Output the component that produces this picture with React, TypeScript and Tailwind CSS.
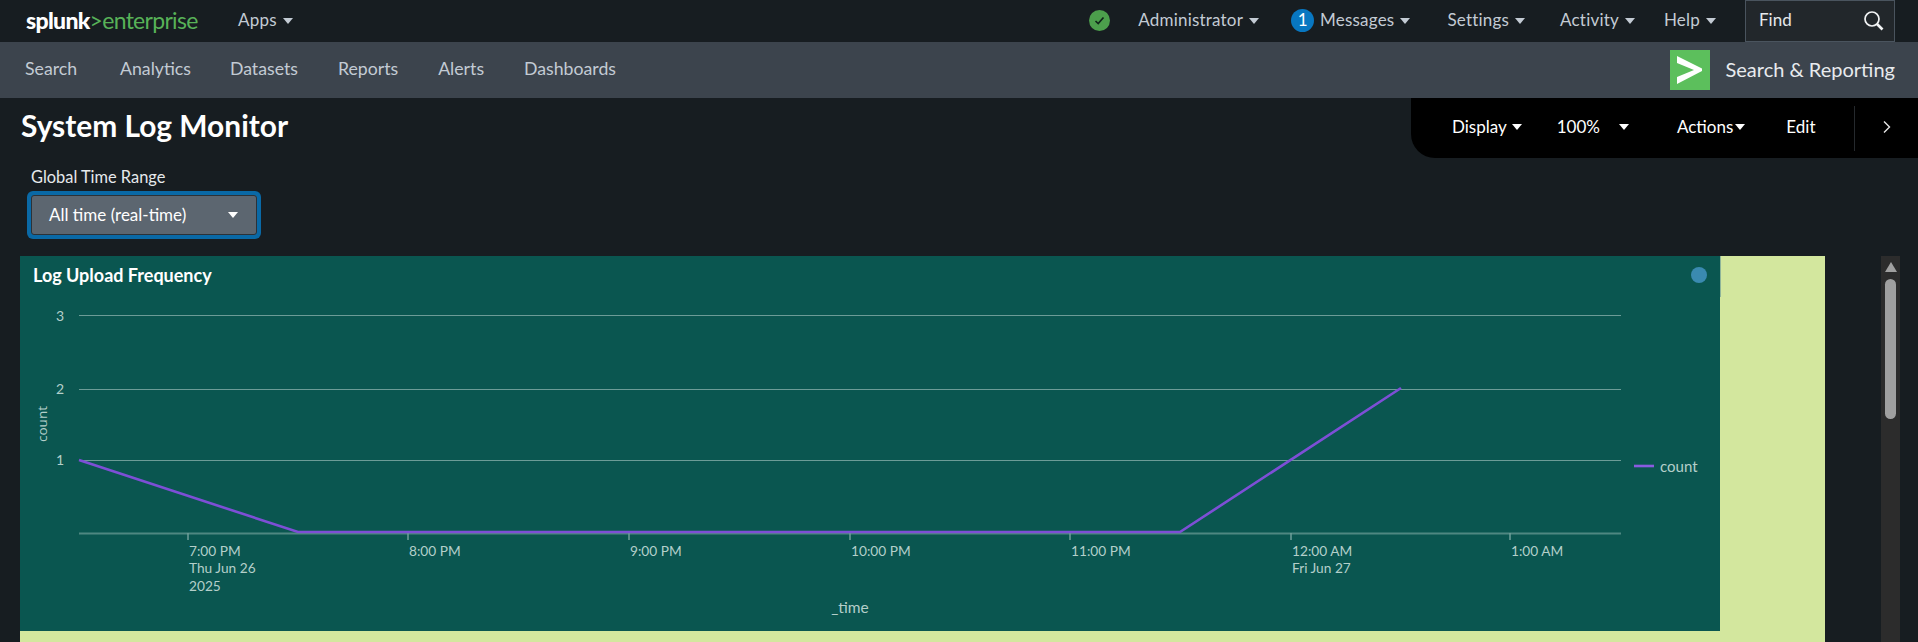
import React from "react";

const font = "font-['Lato','Open_Sans',sans-serif]";

function Caret({ className = "text-[#c3cbd4]" }: { className?: string }) {
  return (
    <svg width="10" height="6" viewBox="0 0 10 6" className={className}>
      <polygon points="0,0 10,0 5,6" fill="currentColor" />
    </svg>
  );
}

function TopItem({ label, ml }: { label: string; ml: string }) {
  return (
    <div className={`flex items-center gap-[6px] ${ml}`}>
      <span className="text-[#c3cbd4] text-[17px] leading-[22px] mt-[-2px] tracking-[0.2px]">{label}</span>
      <Caret />
    </div>
  );
}

function ActionItem({ label, className }: { label: string; className: string }) {
  return (
    <div className={`flex items-center ${className}`}>
      <span className="text-white text-[17px]">{label}</span>
      <Caret className="text-white" />
    </div>
  );
}

function Chart() {
  const grid = [315, 389, 460];
  const ticks = [188, 408, 629, 850, 1070, 1291, 1510];
  const labels: [number, string[]][] = [
    [188, ["7:00 PM", "Thu Jun 26", "2025"]],
    [408, ["8:00 PM"]],
    [629, ["9:00 PM"]],
    [850, ["10:00 PM"]],
    [1070, ["11:00 PM"]],
    [1291, ["12:00 AM", "Fri Jun 27"]],
    [1510, ["1:00 AM"]],
  ];
  const X = (x: number) => x - 20;
  const Y = (y: number) => y - 256;
  const txt = "#b4cfca";
  return (
    <svg width="1700" height="375" viewBox="0 0 1700 375" className="block" style={{ fontFamily: "Lato, 'Open Sans', sans-serif" }}>
      {grid.map((y) => (
        <line key={y} x1={X(79)} x2={X(1621)} y1={Y(y) + 0.5} y2={Y(y) + 0.5} stroke="#6c9c97" strokeWidth="1" />
      ))}
      <line x1={X(79)} x2={X(1621)} y1={Y(533.5)} y2={Y(533.5)} stroke="#4f8781" strokeWidth="2" />
      {ticks.map((x) => (
        <line key={x} x1={X(x)} x2={X(x)} y1={Y(533)} y2={Y(540)} stroke="#6f9f9a" strokeWidth="1.5" />
      ))}
      <polyline
        points={`${X(79)},${Y(460)} ${X(298)},${Y(532)} ${X(1180)},${Y(532)} ${X(1401)},${Y(388)}`}
        fill="none"
        stroke="#7d4fd6"
        strokeWidth="2.6"
      />
      {[["3", 321], ["2", 394], ["1", 465]].map(([t, y]) => (
        <text key={t as string} x={X(64)} y={Y(y as number)} textAnchor="end" fill={txt} fontSize="14">{t}</text>
      ))}
      <text transform={`translate(${X(47)},${Y(424)}) rotate(-90)`} textAnchor="middle" fill={txt} fontSize="13.5" style={{ fontFamily: "'Open Sans', sans-serif" }}>count</text>
      {labels.map(([x, lines]) =>
        lines.map((l, i) => (
          <text key={l} x={X(x) + 1} y={Y(555.5 + i * 17.5)} fill={txt} fontSize="13.7">{l}</text>
        ))
      )}
      <text x={X(850)} y={Y(613)} textAnchor="middle" fill={txt} fontSize="15.5">_time</text>
      <line x1={X(1634)} x2={X(1654)} y1={Y(466)} y2={Y(466)} stroke="#8a5be0" strokeWidth="2.6" />
      <text x={X(1660)} y={Y(472)} fill={txt} fontSize="15">count</text>
    </svg>
  );
}

export default function App() {
  return (
    <div className={`w-[1918px] h-[642px] overflow-hidden flex flex-col bg-[#171d21] ${font}`}>
      {/* top bar */}
      <div className="h-[42px] flex items-center shrink-0">
        <div className="ml-[26px] w-[171px] text-[23px] leading-none tracking-[-0.7px] whitespace-nowrap mt-[-2px]">
          <span className="text-white font-black">splunk</span>
          <span className="text-[#58b258]">&gt;enterprise</span>
        </div>
        <TopItem label="Apps" ml="ml-[41px]" />
        <div className="flex-1" />
        <div className="w-[21px] h-[21px] rounded-full bg-[#4c9f4c] flex items-center justify-center mt-[-1px]">
          <svg width="11" height="11" viewBox="0 0 11 11">
            <path d="M1.5 6 L4.2 8.5 L9.5 2.5" fill="none" stroke="#10251a" strokeWidth="1.7" />
          </svg>
        </div>
        <TopItem label="Administrator" ml="ml-[28px]" />
        <div className="ml-[32px] mt-[-2px] w-[23px] h-[23px] rounded-full bg-[#0877c1] flex items-center justify-center text-white text-[17px]">1</div>
        <TopItem label="Messages" ml="ml-[6px]" />
        <TopItem label="Settings" ml="ml-[37px]" />
        <TopItem label="Activity" ml="ml-[35px]" />
        <TopItem label="Help" ml="ml-[29px]" />
        <div className="ml-[29px] mr-[23px] w-[150px] h-[42px] bg-[#22272b] border border-[#4a545e] flex items-center justify-between pl-[13px] pr-[10px]">
          <span className="text-[#e6e9ec] text-[17px] mt-[-2px]">Find</span>
          <svg width="21" height="21" viewBox="0 0 21 21" className="mt-[-2px]">
            <circle cx="9" cy="9" r="7" fill="none" stroke="#f2f4f5" strokeWidth="1.7" />
            <line x1="14" y1="14" x2="19.5" y2="19.5" stroke="#f2f4f5" strokeWidth="2.6" />
          </svg>
        </div>
      </div>

      {/* app bar */}
      <div className="h-[56px] bg-[#3c444d] flex items-center shrink-0 text-[17.7px] text-[#c3cbd4]">
        <div className="flex items-center mt-[-2px]">
          <span className="ml-[25px]">Search</span>
          <span className="ml-[43px]">Analytics</span>
          <span className="ml-[39px]">Datasets</span>
          <span className="ml-[40px]">Reports</span>
          <span className="ml-[40px]">Alerts</span>
          <span className="ml-[40px]">Dashboards</span>
        </div>
        <div className="flex-1" />
        <div className="w-[40px] h-[40px] bg-[#5cbf5c] flex items-center justify-center">
          <svg width="25" height="28" viewBox="0 0 25 28">
            <polygon points="0,0 25,12.5 25,15 0,28 0,21 17,14 0,7" fill="#fff" />
          </svg>
        </div>
        <span className="ml-[16px] mr-[23px] text-[#e8ebee] text-[20px] mt-[-3px]">Search &amp; Reporting</span>
      </div>

      {/* title row */}
      <div className="h-[60px] flex items-start shrink-0">
        <h1 className="ml-[21px] mt-[9px] text-white text-[29.9px] leading-[36px] font-bold whitespace-nowrap">System Log Monitor</h1>
        <div className="flex-1" />
        <div className="w-[507px] h-[60px] bg-black rounded-bl-[24px] flex items-center pb-[2px]">
          <ActionItem label="Display" className="ml-[41px] gap-[5px]" />
          <ActionItem label="100%" className="ml-[35px] gap-[19px]" />
          <ActionItem label="Actions" className="ml-[48px] gap-[2px]" />
          <span className="ml-[41px] text-white text-[17px]">Edit</span>
          <div className="ml-[39px] w-px h-[45px] bg-[#25292d] mt-[2px]" />
          <svg width="8" height="12" viewBox="0 0 8 12" className="ml-[28px]">
            <path d="M1 0.5 L6.5 6 L1 11.5" fill="none" stroke="#e6e6e6" strokeWidth="1.4" />
          </svg>
        </div>
      </div>

      {/* input */}
      <div className="pl-[27px] h-[98px] shrink-0">
        <div className="ml-[4px] mt-[10px] text-[#e6e9ec] text-[16.4px] leading-[18px]">Global Time Range</div>
        <div className="mt-[5px] w-[234px] h-[48px] rounded-[6px] bg-[#0a69a6] p-[4px] flex">
          <div className="flex-1 rounded-[3px] bg-[#5c6670] border border-[#2c3238] flex items-center justify-between pl-[17px] pr-[18px]">
            <span className="text-white text-[17px]">All time (real-time)</span>
            <Caret className="text-white" />
          </div>
        </div>
      </div>

      {/* dashboard */}
      <div className="flex flex-1 min-h-0 pl-[20px]">
        <div className="w-[1805px] bg-[#d3e79e]">
          <div className="w-[1700px] h-[375px] bg-[#0a5650] relative">
            <div className="absolute left-[13px] top-[6px] text-white text-[18px] font-bold">Log Upload Frequency</div>
            <div className="absolute left-[1671px] top-[11px] w-[16px] h-[16px] rounded-full bg-[#3a8ab0]" />
            <div className="absolute left-[1700px] top-0 w-px h-[41px] bg-[#8fb59a]" />
            <Chart />
          </div>
        </div>
        <div className="ml-[56px] w-[19px] bg-[#2c2c2c] flex flex-col items-center">
          <svg width="12" height="10" viewBox="0 0 12 10" className="mt-[6px]">
            <polygon points="6,0 12,10 0,10" fill="#a0a0a0" />
          </svg>
          <div className="mt-[7px] w-[11px] h-[140px] rounded-full bg-[#a0a0a0]" />
        </div>
      </div>
    </div>
  );
}
